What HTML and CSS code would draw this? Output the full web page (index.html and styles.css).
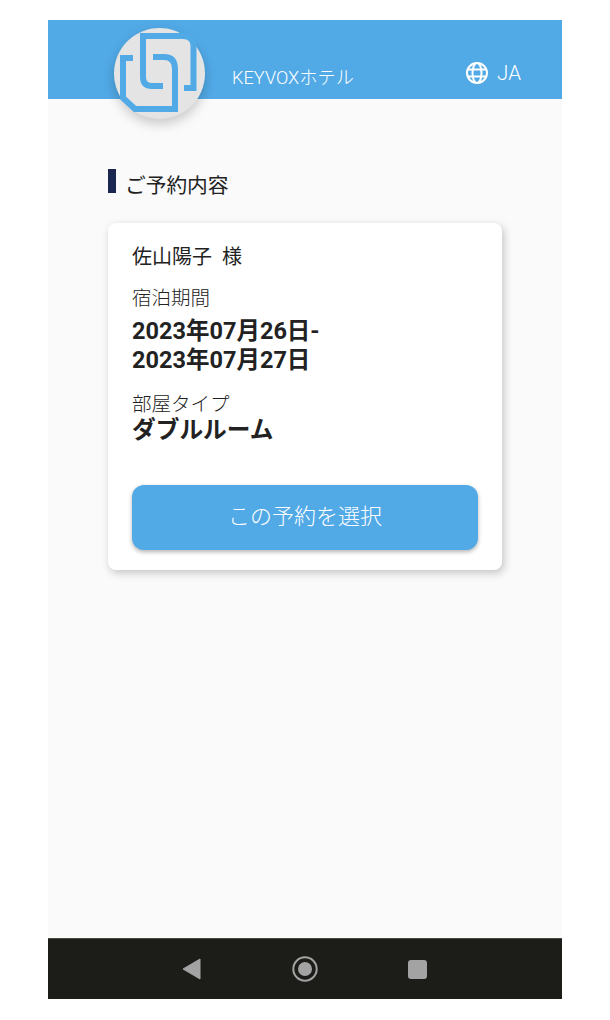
FILE: index.html
```html
<!DOCTYPE html>
<html lang="ja">
<head>
    <meta charset="UTF-8">
    <meta name="viewport" content="width=device-width, initial-scale=1.0">
    <title>ご予約内容</title>
    <link rel="stylesheet" href="styles.css">
</head>
<body>
    <div class="screen">
        <div class="navbar">
            <div class="logo">
                <svg viewBox="0 0 91 91" width="91" height="91" fill="none" stroke="#51a9e6" stroke-width="6">
                    <path d="M49 58H38Q29 58 29 49V8H69Q79.5 8 79.5 18V60H70"/>
                    <path d="M19 30H9V70L21 81H61V41Q61 29 50 29H39"/>
                </svg>
            </div>
            <span class="hotel-name">KEYVOXホテル</span>
            <div class="lang">
                <svg viewBox="0 0 24 24" width="24" height="24" fill="none" stroke="#fff" stroke-width="2">
                    <circle cx="12" cy="12" r="10"/>
                    <ellipse cx="12" cy="12" rx="4.5" ry="10"/>
                    <path d="M3 8.5H21M3 15.5H21"/>
                </svg>
                <span>JA</span>
            </div>
        </div>

        <div class="content">
            <h1 class="section-title">ご予約内容</h1>
            <div class="card">
                <div class="guest">佐山陽子 様</div>
                <div class="label">宿泊期間</div>
                <div class="value">2023年07月26日-<br>2023年07月27日</div>
                <div class="label label-room">部屋タイプ</div>
                <div class="value value-room">ダブルルーム</div>
                <button type="button" class="select-button">この予約を選択</button>
            </div>
        </div>

        <div class="system-nav">
            <svg viewBox="0 0 20 24" width="20" height="24" fill="#a3a3a3"><path d="M18 2V22L1 12Z" stroke="#a3a3a3" stroke-linejoin="round"/></svg>
            <svg viewBox="0 0 26 26" width="26" height="26" fill="#a3a3a3"><circle cx="13" cy="13" r="11.7" fill="none" stroke="#a3a3a3" stroke-width="2"/><circle cx="13" cy="13" r="7"/></svg>
            <div class="square"></div>
        </div>
    </div>
</body>
</html>
```

FILE: styles.css
```css
body {
    margin: 0;
    padding: 20px 48px 21px;
    background-color: #fff;
    font-family: Roboto, "Noto Sans CJK JP", sans-serif;
    color: #222;
}

.screen {
    display: flex;
    flex-direction: column;
    height: 979px;
    background-color: #fafafa;
}

.navbar {
    position: relative;
    display: flex;
    align-items: center;
    height: 79px;
    padding: 32px 41px 0 184px;
    box-sizing: border-box;
    background-color: #51a9e6;
    color: #fff;
}

.logo {
    position: absolute;
    left: 66px;
    top: 8px;
    width: 91px;
    height: 91px;
    border-radius: 50%;
    background-color: #e4e4e4;
    box-shadow: 0 5px 12px rgba(0, 0, 0, 0.2);
}

.logo svg {
    display: block;
}

.hotel-name {
    font-size: 18.2px;
    font-weight: 300;
}

.lang {
    display: flex;
    align-items: center;
    gap: 8px;
    margin-left: auto;
    margin-top: -5px;
    font-size: 20.5px;
    font-weight: 300;
}

.content {
    flex: 1;
    padding: 69px 60px 0;
}

.section-title {
    position: relative;
    height: 36px;
    margin: 0 0 19px;
    padding-left: 17px;
    font-size: 20.7px;
    line-height: 36px;
    font-weight: 400;
}

.section-title::before {
    content: "";
    position: absolute;
    left: 0;
    top: 1px;
    width: 8px;
    height: 24px;
    background-color: #1a2550;
}

.card {
    padding: 19px 24px 20px;
    border-radius: 8px;
    background-color: #fff;
    box-shadow: 2px 3px 8px rgba(0, 0, 0, 0.22);
}

.guest {
    margin-bottom: 13px;
    font-size: 20px;
    line-height: 30px;
    word-spacing: 5px;
}

.label {
    font-size: 19.5px;
    line-height: 28px;
    font-weight: 300;
}

.value {
    margin-top: 4px;
    font-size: 23.5px;
    line-height: 29px;
    font-weight: 700;
}

.label-room {
    margin-top: 16px;
}

.value-room {
    margin-top: -3px;
    font-size: 23.7px;
}

.select-button {
    display: block;
    width: 100%;
    height: 65px;
    margin-top: 40px;
    padding: 0 0 7px;
    border: none;
    border-radius: 12px;
    background-color: #51a9e6;
    color: #fff;
    font-family: inherit;
    font-size: 22px;
    font-weight: 300;
    box-shadow: 0 2px 4px rgba(0, 0, 0, 0.3);
}

.system-nav {
    display: flex;
    align-items: center;
    justify-content: space-between;
    height: 61px;
    padding: 0 135px 0 134px;
    box-sizing: border-box;
    background-color: #1c1c18;
    border-top: 1px solid #4a4a44;
}

.square {
    width: 19px;
    height: 19px;
    border-radius: 3px;
    background-color: #a3a3a3;
}
```
